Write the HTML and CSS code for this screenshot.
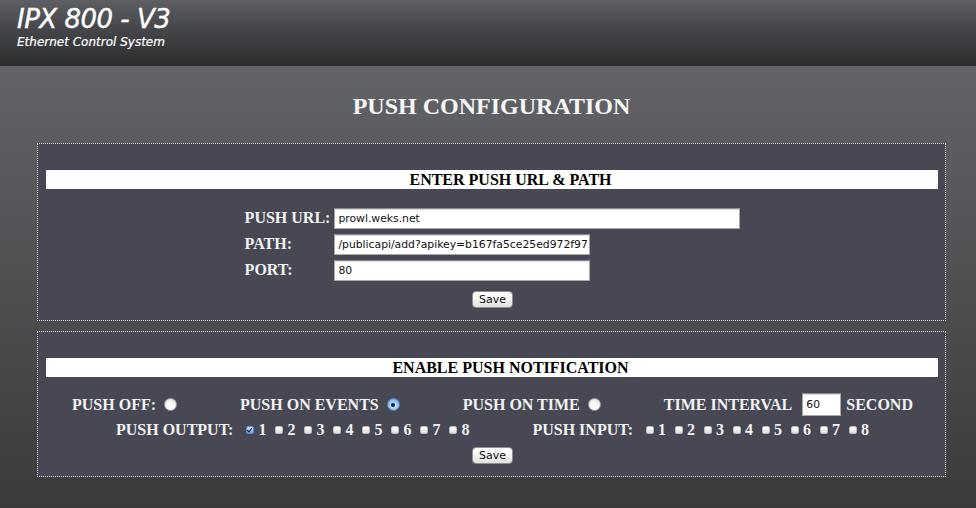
FILE: index.html
```html
<!DOCTYPE html>
<html>
<head>
<meta charset="utf-8">
<link rel="stylesheet" href="styles.css">
</head>
<body>
<header class="top">
  <h1 class="brand">IPX 800 - V3</h1>
  <p class="tagline">Ethernet Control System</p>
</header>
<main class="content">
  <h2 class="page-title">PUSH CONFIGURATION</h2>

  <section class="panel">
    <div class="bar">ENTER PUSH URL &amp; PATH</div>
    <div class="form-grid">
      <label class="lbl">PUSH URL:</label>
      <input class="field field-wide" type="text" value="prowl.weks.net">
      <label class="lbl">PATH:</label>
      <input class="field" type="text" value="/publicapi/add?apikey=b167fa5ce25ed972f97">
      <label class="lbl">PORT:</label>
      <input class="field" type="text" value="80">
    </div>
    <div class="actions"><button class="btn" type="button">Save</button></div>
  </section>

  <section class="panel panel-second">
    <div class="bar">ENABLE PUSH NOTIFICATION</div>
    <div class="row row-modes">
      <div class="group"><span class="lbl">PUSH OFF:</span><span class="radio"></span></div>
      <div class="group"><span class="lbl">PUSH ON EVENTS</span><span class="radio radio-on"></span></div>
      <div class="group"><span class="lbl">PUSH ON TIME</span><span class="radio"></span></div>
      <div class="group"><span class="lbl">TIME INTERVAL</span><input class="field field-small" type="text" value="60"><span class="lbl lbl-after">SECOND</span></div>
    </div>
    <div class="row row-checks">
      <div class="group">
        <span class="lbl">PUSH OUTPUT:</span>
        <div class="checks">
          <span class="chk-item"><span class="chk chk-on"></span><span class="lbl">1</span></span>
          <span class="chk-item"><span class="chk"></span><span class="lbl">2</span></span>
          <span class="chk-item"><span class="chk"></span><span class="lbl">3</span></span>
          <span class="chk-item"><span class="chk"></span><span class="lbl">4</span></span>
          <span class="chk-item"><span class="chk"></span><span class="lbl">5</span></span>
          <span class="chk-item"><span class="chk"></span><span class="lbl">6</span></span>
          <span class="chk-item"><span class="chk"></span><span class="lbl">7</span></span>
          <span class="chk-item"><span class="chk"></span><span class="lbl">8</span></span>
        </div>
      </div>
      <div class="group">
        <span class="lbl">PUSH INPUT:</span>
        <div class="checks">
          <span class="chk-item"><span class="chk"></span><span class="lbl">1</span></span>
          <span class="chk-item"><span class="chk"></span><span class="lbl">2</span></span>
          <span class="chk-item"><span class="chk"></span><span class="lbl">3</span></span>
          <span class="chk-item"><span class="chk"></span><span class="lbl">4</span></span>
          <span class="chk-item"><span class="chk"></span><span class="lbl">5</span></span>
          <span class="chk-item"><span class="chk"></span><span class="lbl">6</span></span>
          <span class="chk-item"><span class="chk"></span><span class="lbl">7</span></span>
          <span class="chk-item"><span class="chk"></span><span class="lbl">8</span></span>
        </div>
      </div>
    </div>
    <div class="actions actions-second"><button class="btn" type="button">Save</button></div>
  </section>
</main>
</body>
</html>
```

FILE: styles.css
```css
html, body {
  margin: 0;
  padding: 0;
}
body {
  min-height: 100vh;
  background: linear-gradient(to bottom, #68696d 0px, #5a5b5f 160px, #4a4a4c 340px, #3b3b3c 508px);
  font-family: "Liberation Serif", "Times New Roman", serif;
  color: #f4f4f4;
}
.top {
  height: 66px;
  box-sizing: border-box;
  background: linear-gradient(to bottom, #5e5f63 0%, #45464a 45%, #2c2d2f 100%);
  border-bottom: 1px solid #2a2a2b;
  padding: 4px 0 0 17px;
}
.brand {
  margin: 0;
  font-family: "DejaVu Sans", sans-serif;
  font-style: italic;
  font-weight: normal;
  font-size: 26px;
  line-height: 30px;
  color: #ffffff;
  letter-spacing: -0.5px;
  -webkit-text-stroke: 0.4px #ffffff;
}
.tagline {
  margin: 1px 0 0 0;
  font-family: "DejaVu Sans", sans-serif;
  font-style: italic;
  font-size: 12px;
  line-height: 14px;
  color: #ffffff;
  -webkit-text-stroke: 0.2px #ffffff;
}
.content {
  padding: 0;
}
.page-title {
  margin: 26px 0 0 0;
  text-align: center;
  font-size: 24px;
  line-height: 28px;
  font-weight: bold;
  color: #f6f6f6;
  padding-left: 7px;
}
.panel {
  margin: 23px 30px 0 37px;
  background: #474854;
  border: 1px dotted #d8d8d8;
  padding: 26px 7px 12px 8px;
}
.panel-second {
  margin-top: 10px;
}
.bar {
  background: #ffffff;
  color: #000000;
  height: 19px;
  line-height: 19px;
  font-size: 16px;
  font-weight: bold;
  text-align: center;
  padding-left: 37px;
}
.form-grid {
  display: grid;
  grid-template-columns: auto auto;
  justify-content: center;
  align-items: center;
  column-gap: 4px;
  row-gap: 5px;
  margin-top: 19px;
  padding-left: 1px;
}
.lbl {
  font-size: 16px;
  font-weight: bold;
  color: #f2f2f2;
  white-space: nowrap;
}
.form-grid .lbl {
  align-self: start;
  line-height: 20px;
}
.field {
  box-sizing: border-box;
  height: 21px;
  width: 256px;
  border: 1px solid #a8a8a8;
  border-top-color: #8c8c8c;
  box-shadow: inset 0 1px 1px rgba(0,0,0,0.15);
  background: #ffffff;
  padding: 0 2px 0 3px;
  font-family: "DejaVu Sans", sans-serif;
  font-size: 10.8px;
  color: #111;
  outline: none;
  margin: 0;
}
.field-wide {
  width: 406px;
}
.field-small {
  width: 39px;
  height: 23px;
  margin: 0 5px 0 10px;
}
.actions {
  display: flex;
  justify-content: center;
  margin-top: 10px;
  padding-left: 1px;
}
.actions-second {
  margin-top: 7px;
}
.btn {
  box-sizing: border-box;
  width: 41px;
  height: 17px;
  padding: 0;
  border: 1px solid #8f8f8f;
  border-radius: 4px;
  background: linear-gradient(to bottom, #ffffff 0%, #f3f3f3 50%, #e2e2e2 100%);
  font-family: "DejaVu Sans", sans-serif;
  font-size: 11px;
  line-height: 15px;
  color: #111;
}
.row {
  display: flex;
  justify-content: center;
  align-items: center;
}
.row-modes {
  height: 23px;
  margin-top: 16px;
  gap: 63px;
  padding-left: 1px;
}
.row-checks {
  height: 20px;
  margin-top: 4px;
  gap: 63px;
  padding-left: 1px;
}
.group {
  display: flex;
  align-items: center;
}
.radio {
  box-sizing: border-box;
  width: 13px;
  height: 13px;
  border-radius: 50%;
  margin-left: 8px;
  background: radial-gradient(circle at 50% 65%, #ffffff 0%, #f6f6f6 50%, #d6d6d6 100%);
  border: 1px solid #a4a4a4;
  position: relative;
}
.radio-on {
  background: radial-gradient(circle at 50% 60%, #d6ecff 0%, #8fc3f5 55%, #5a9ae0 100%);
  border-color: #5a82b8;
}
.radio-on::after {
  content: "";
  position: absolute;
  left: 3.5px;
  top: 3.5px;
  width: 4px;
  height: 4px;
  border-radius: 50%;
  background: #1a2030;
}
.checks {
  display: flex;
  align-items: center;
  gap: 9px;
  margin-left: 13px;
}
.chk-item {
  display: flex;
  align-items: center;
}
.chk {
  box-sizing: border-box;
  width: 8px;
  height: 8px;
  border-radius: 2px;
  background: linear-gradient(to bottom, #ffffff, #dedede);
  border: 1px solid #bdbdbd;
  margin-right: 4px;
  position: relative;
}
.chk-on {
  background: linear-gradient(to bottom, #cfe6ff, #6aa6e8);
  border-color: #6a8cc0;
}
.chk-on::after {
  content: "";
  position: absolute;
  left: 1px;
  top: 0px;
  width: 2px;
  height: 4px;
  border: solid #15203a;
  border-width: 0 1.5px 1.5px 0;
  transform: rotate(40deg);
}
```
